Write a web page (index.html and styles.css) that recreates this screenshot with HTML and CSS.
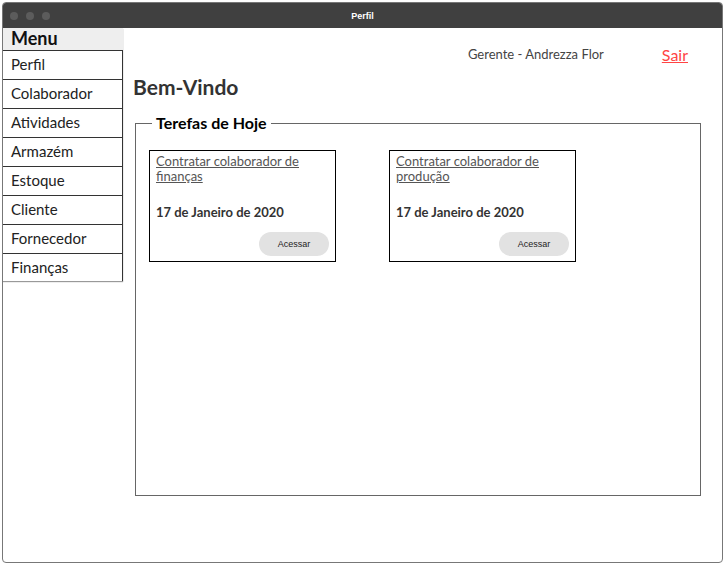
FILE: index.html
```html
<!DOCTYPE html>
<html lang="pt-BR">
<head>
    <meta charset="UTF-8">
    <title>Perfil</title>
    <link rel="stylesheet" href="styles.css">
</head>
<body>
    <div class="window">
        <div class="titlebar">
            <div class="dots">
                <span class="dot"></span>
                <span class="dot"></span>
                <span class="dot"></span>
            </div>
            <span class="window-title">Perfil</span>
        </div>

        <div class="app">
            <!-- Menu lateral -->
            <div class="menu">
                <div class="menu-header">Menu</div>
                <a class="menu-item" href="#">Perfil</a>
                <a class="menu-item" href="#">Colaborador</a>
                <a class="menu-item" href="#">Atividades</a>
                <a class="menu-item" href="#">Armazém</a>
                <a class="menu-item" href="#">Estoque</a>
                <a class="menu-item" href="#">Cliente</a>
                <a class="menu-item" href="#">Fornecedor</a>
                <a class="menu-item" href="#">Finanças</a>
            </div>

            <div class="main">
                <div class="topbar">
                    <span class="user">Gerente - Andrezza Flor</span>
                    <a class="logout" href="#">Sair</a>
                </div>

                <h1 class="welcome">Bem-Vindo</h1>

                <fieldset class="tasks">
                    <legend>Terefas de Hoje</legend>
                    <div class="task-list">
                        <div class="task-card">
                            <a class="task-title" href="#">Contratar colaborador de finanças</a>
                            <div class="task-date">17 de Janeiro de 2020</div>
                            <button class="btn">Acessar</button>
                        </div>
                        <div class="task-card">
                            <a class="task-title" href="#">Contratar colaborador de produção</a>
                            <div class="task-date">17 de Janeiro de 2020</div>
                            <button class="btn">Acessar</button>
                        </div>
                    </div>
                </fieldset>
            </div>
        </div>
    </div>
</body>
</html>
```

FILE: styles.css
```css
* {
    margin: 0;
    padding: 0;
    box-sizing: border-box;
}

body {
    font-family: Lato, 'Open Sans', sans-serif;
    background: #fff;
    color: #333;
    padding: 2px 0 0 2px;
}

.window {
    width: 721px;
    height: 561px;
    border: 1px solid #777;
    border-radius: 4px;
    overflow: hidden;
    display: flex;
    flex-direction: column;
    background: #fff;
}

.titlebar {
    height: 25px;
    background: #404040;
    display: flex;
    align-items: center;
    position: relative;
    flex-shrink: 0;
}

.dots {
    display: flex;
    gap: 8px;
    padding-left: 7px;
}

.dot {
    width: 8px;
    height: 8px;
    border-radius: 50%;
    background: #5c5c5c;
}

.window-title {
    position: absolute;
    left: 0;
    right: 0;
    text-align: center;
    color: #fff;
    font-family: 'Liberation Sans', Arial, sans-serif;
    font-size: 9px;
    font-weight: bold;
}

.app {
    flex: 1;
    display: flex;
    align-items: flex-start;
}

/* Menu */
.menu {
    width: 120px;
    flex-shrink: 0;
    display: flex;
    flex-direction: column;
    box-shadow: 0 1px 1px rgba(0,0,0,0.4);
}

.menu-header {
    height: 22px;
    background: #eee;
    font-size: 18px;
    font-weight: bold;
    color: #111;
    padding-left: 8px;
    line-height: 21px;
}

.menu-item {
    height: 29px;
    line-height: 27px;
    padding-left: 8px;
    font-size: 15px;
    color: #222;
    text-decoration: none;
    border-right: 1px solid #333;
    border-top: 1px solid #333;
}

.menu-item:last-child {
    height: 28px;
}

/* Conteudo */
.main {
    flex: 1;
    padding: 15px 21px 0 10px;
}

.topbar {
    display: flex;
    justify-content: flex-end;
    align-items: center;
    height: 22px;
}

.user {
    font-size: 13px;
    color: #444;
}

.logout {
    margin-left: 58px;
    margin-right: 13px;
    font-size: 16px;
    color: #f44;
}

.welcome {
    font-size: 21px;
    color: #333;
    margin-top: 9px;
    line-height: 26px;
}

.tasks {
    margin: 13px 0 0 2px;
    height: 383px;
    border: 1px solid #666;
    padding: 0 16px 0 13px;
}

.tasks legend {
    margin-left: 3px;
    padding: 0 4px;
    font-size: 16px;
    font-weight: bold;
    color: #000;
    line-height: 20px;
}

.task-list {
    display: flex;
    gap: 53px;
    margin-top: 17px;
}

.task-card {
    width: 187px;
    height: 112px;
    border: 1px solid #000;
    padding: 3px 6px 5px 6px;
    display: flex;
    flex-direction: column;
}

.task-title {
    font-size: 13px;
    line-height: 15px;
    color: #555;
}

.task-date {
    margin-top: 20px;
    font-size: 13px;
    font-weight: bold;
    color: #333;
}

.btn {
    margin-top: auto;
    align-self: flex-end;
    width: 70px;
    height: 24px;
    border: none;
    border-radius: 12px;
    background: #e2e2e2;
    font-family: 'Liberation Sans', Arial, sans-serif;
    font-size: 9px;
    color: #222;
}
```
